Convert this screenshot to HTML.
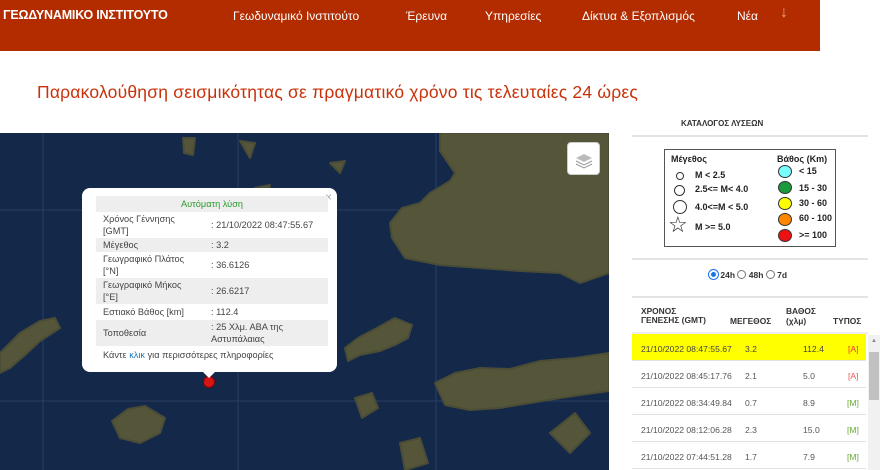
<!DOCTYPE html>
<html><head><meta charset="utf-8"><style>
*{margin:0;padding:0;box-sizing:border-box}
body{width:880px;height:470px;overflow:hidden;background:#fff;font-family:"Liberation Sans",sans-serif;position:relative}
.hdr{position:absolute;left:0;top:0;width:820px;height:51px;background:#b22c00}
.logo{position:absolute;left:3px;top:8px;color:#fff;font-weight:bold;font-size:12.5px;letter-spacing:-0.2px}
.nav{position:absolute;top:9px;color:#fff;font-size:12px}
h1{position:absolute;left:37px;top:82px;font-size:17.5px;font-weight:normal;color:#c8320a;letter-spacing:0.2px}
.map{position:absolute;left:0;top:133px;width:609px;height:337px;background:#14294a;overflow:hidden}
.pop{position:absolute;left:82px;top:188px;width:255px;height:184px;background:#fff;border-radius:8px;font-size:9.2px;color:#444}
.pop table{position:absolute;left:14px;top:8px;width:232px;border-collapse:collapse}
.pop td{padding:1px 7px;line-height:12px;vertical-align:middle}
.pop tr.g td{background:#eee}
.leg{position:absolute;left:664px;top:149px;width:172px;height:98px;border:1px solid #555;font-size:9px;font-weight:bold;color:#222}
.leg span{position:absolute}
.c{position:absolute;border:1px solid #333;border-radius:50%}
.tb{position:absolute;left:632px;font-size:8.4px;color:#444}
.row{position:absolute;left:632px;width:234px;height:27px;border-bottom:1px solid #e2e2e2;font-size:8.6px;color:#555}
.row span{position:absolute;top:10px}
</style></head><body>
<div class="hdr">
<div class="logo">ΓΕΩΔΥΝΑΜΙΚΟ ΙΝΣΤΙΤΟΥΤΟ</div>
<div class="nav" style="left:233px">Γεωδυναμικό Ινστιτούτο</div>
<div class="nav" style="left:406px">Έρευνα</div>
<div class="nav" style="left:485px">Υπηρεσίες</div>
<div class="nav" style="left:582px">Δίκτυα &amp; Εξοπλισμός</div>
<div class="nav" style="left:737px">Νέα</div>
<div class="nav" style="left:780px;top:4px;font-size:16px;color:#e8a090">↓</div>
</div>
<h1>Παρακολούθηση σεισμικότητας σε πραγματικό χρόνο τις τελευταίες 24 ώρες</h1>
<div class="map">
<svg width="609" height="337" style="position:absolute;left:0;top:0">
<g stroke="#2a3f60" stroke-width="1"><line x1="43" y1="0" x2="43" y2="337"/><line x1="238" y1="0" x2="238" y2="337"/><line x1="436" y1="0" x2="436" y2="337"/><line x1="0" y1="77" x2="609" y2="77"/><line x1="0" y1="268" x2="609" y2="268"/></g>
<g fill="#55553a" stroke="#4a4c36" stroke-width="2" stroke-linejoin="round">
<path d="M440 0 L609 0 L609 140 L580 150 L560 140 L520 138 L480 135 L440 132 L405 125 L392 105 L390 90 L402 75 L420 70 L430 60 L450 48 L455 40 L440 18 Z"/>
<path d="M345 215 L358 205 L375 196 L395 185 L412 192 L408 205 L395 212 L380 218 L360 222 L348 228 Z"/>
<path d="M435 250 L455 240 L480 235 L510 236 L540 228 L575 225 L609 220 L609 258 L580 262 L560 265 L530 270 L500 275 L470 277 L445 272 Z"/>
<path d="M0 220 L20 200 L40 188 L55 185 L60 195 L40 208 L25 222 L10 235 L0 240 Z"/>
<path d="M112 288 L128 276 L145 273 L165 285 L160 300 L140 310 L120 305 Z"/>
<path d="M355 265 L372 260 L378 275 L362 285 Z"/>
<path d="M550 300 L575 280 L590 300 L570 320 Z"/>
<path d="M400 310 L420 305 L428 330 L405 337 Z"/>
<path d="M183 5 L195 5 L193 22 L184 20 Z"/><path d="M240 8 L255 10 L250 25 Z"/>
<path d="M330 30 L345 28 L340 40 Z"/><path d="M255 55 L270 52 L268 62 Z"/>
</g>
</svg>
<div style="position:absolute;left:567px;top:9px;width:33px;height:33px;background:#fff;border-radius:4px;border:1px solid #ccc">
<svg width="33" height="33"><path d="M8 15 L16 11 L24 15 L16 19Z" fill="#bbb"/><path d="M8 18 L16 22 L24 18" stroke="#999" fill="none"/><path d="M8 21 L16 25 L24 21" stroke="#999" fill="none"/></svg></div>
<div style="position:absolute;left:203px;top:243px;width:12px;height:12px;border-radius:50%;background:#d61515;border:1px solid #800"></div>
</div>
<div class="pop">
<span style="position:absolute;right:5px;top:2px;color:#aaa;font-size:12px">×</span>
<table>
<tr class="g"><td colspan="2" style="text-align:center;color:#2a9a2a;padding:2px">Αυτόματη λύση</td></tr>
<tr><td style="width:108px">Χρόνος Γέννησης [GMT]</td><td>: 21/10/2022 08:47:55.67</td></tr>
<tr class="g"><td>Μέγεθος</td><td>: 3.2</td></tr>
<tr><td>Γεωγραφικό Πλάτος [°N]</td><td>: 36.6126</td></tr>
<tr class="g"><td>Γεωγραφικό Μήκος [°E]</td><td>: 26.6217</td></tr>
<tr><td style="padding:2px 7px">Εστιακό Βάθος [km]</td><td>: 112.4</td></tr>
<tr class="g"><td>Τοποθεσία</td><td>: 25 Χλμ. ΑΒΑ της Αστυπάλαιας</td></tr>
<tr><td colspan="2" style="padding:3px 7px">Κάντε <span style="color:#1a7ac0">κλικ</span> για περισσότερες πληροφορίες</td></tr>
</table>
<div style="position:absolute;left:121px;bottom:-6px;width:0;height:0;border-left:6px solid transparent;border-right:6px solid transparent;border-top:6px solid #fff"></div>
</div>
<div style="position:absolute;left:681px;top:119px;font-size:8px;font-weight:bold;color:#333">ΚΑΤΑΛΟΓΟΣ ΛΥΣΕΩΝ</div>
<div style="position:absolute;left:632px;top:135px;width:236px;height:2px;background:#e3e3e3"></div>
<div class="leg">
<span style="left:6px;top:4px">Μέγεθος</span><span style="left:112px;top:4px">Βάθος (Km)</span>
<div class="c" style="left:11px;top:22px;width:8px;height:8px"></div><span style="left:30px;top:20px">M &lt; 2.5</span>
<div class="c" style="left:9px;top:35px;width:11px;height:11px"></div><span style="left:30px;top:34px">2.5&lt;= M&lt; 4.0</span>
<div class="c" style="left:8px;top:50px;width:14px;height:14px"></div><span style="left:30px;top:52px">4.0&lt;=M &lt; 5.0</span>
<span style="left:3px;top:64px;font-size:22px;font-weight:normal;line-height:22px">☆</span><span style="left:30px;top:72px">M &gt;= 5.0</span>
<div class="c" style="left:113px;top:15px;width:14px;height:13px;background:#7ff"></div><span style="left:134px;top:16px">&lt; 15</span>
<div class="c" style="left:113px;top:31px;width:14px;height:13px;background:#1a9a3a"></div><span style="left:134px;top:33px">15 - 30</span>
<div class="c" style="left:113px;top:47px;width:14px;height:13px;background:#ff0"></div><span style="left:134px;top:48px">30 - 60</span>
<div class="c" style="left:113px;top:63px;width:14px;height:13px;background:#f80"></div><span style="left:134px;top:63px">60 - 100</span>
<div class="c" style="left:113px;top:79px;width:14px;height:13px;background:#e11"></div><span style="left:134px;top:80px">&gt;= 100</span>
</div>
<div style="position:absolute;left:632px;top:258px;width:236px;height:2px;background:#e3e3e3"></div>
<div style="position:absolute;left:709px;top:270px;font-size:8.5px;font-weight:bold;color:#333">
<span style="display:inline-block;width:9px;height:9px;border-radius:50%;background:#1a73e8;vertical-align:-1px;border:2px solid #fff;box-shadow:0 0 0 1px #1a73e8"></span> 24h <span style="display:inline-block;width:9px;height:9px;border-radius:50%;border:1px solid #777;vertical-align:-1px"></span> 48h <span style="display:inline-block;width:9px;height:9px;border-radius:50%;border:1px solid #777;vertical-align:-1px"></span> 7d</div>
<div style="position:absolute;left:632px;top:296px;width:236px;height:2px;background:#e3e3e3"></div>
<div class="tb" style="top:307px;left:641px;font-weight:bold;line-height:9px;color:#333">ΧΡΟΝΟΣ<br>ΓΕΝΕΣΗΣ (GMT)</div>
<div class="tb" style="top:316px;left:730px;font-weight:bold;color:#333">ΜΕΓΕΘΟΣ</div>
<div class="tb" style="top:306px;left:786px;font-weight:bold;line-height:10px;color:#333">ΒΑΘΟΣ<br>(χλμ)</div>
<div class="tb" style="top:316px;left:833px;font-weight:bold;color:#333">ΤΥΠΟΣ</div>
<div style="position:absolute;left:632px;top:332px;width:236px;height:2px;background:#eee"></div>
<div class="row" style="top:334px;background:#ff0;color:#444"><span style="left:9px">21/10/2022 08:47:55.67</span><span style="left:113px">3.2</span><span style="left:171px">112.4</span><span style="left:216px;color:#e33">[A]</span></div>
<div class="row" style="top:361px"><span style="left:9px">21/10/2022 08:45:17.76</span><span style="left:113px">2.1</span><span style="left:171px">5.0</span><span style="left:216px;color:#e55">[A]</span></div>
<div class="row" style="top:388px"><span style="left:9px">21/10/2022 08:34:49.84</span><span style="left:113px">0.7</span><span style="left:171px">8.9</span><span style="left:215px;color:#6a3">[M]</span></div>
<div class="row" style="top:415px"><span style="left:9px">21/10/2022 08:12:06.28</span><span style="left:113px">2.3</span><span style="left:171px">15.0</span><span style="left:215px;color:#6a3">[M]</span></div>
<div class="row" style="top:442px"><span style="left:9px">21/10/2022 07:44:51.28</span><span style="left:113px">1.7</span><span style="left:171px">7.9</span><span style="left:215px;color:#6a3">[M]</span></div>
<div style="position:absolute;left:868px;top:335px;width:12px;height:135px;background:#f1f1f1"></div>
<div style="position:absolute;left:869px;top:352px;width:10px;height:48px;background:#c1c1c1"></div>
<div style="position:absolute;left:871px;top:338px;font-size:6px;color:#888">▲</div>
</body></html>
